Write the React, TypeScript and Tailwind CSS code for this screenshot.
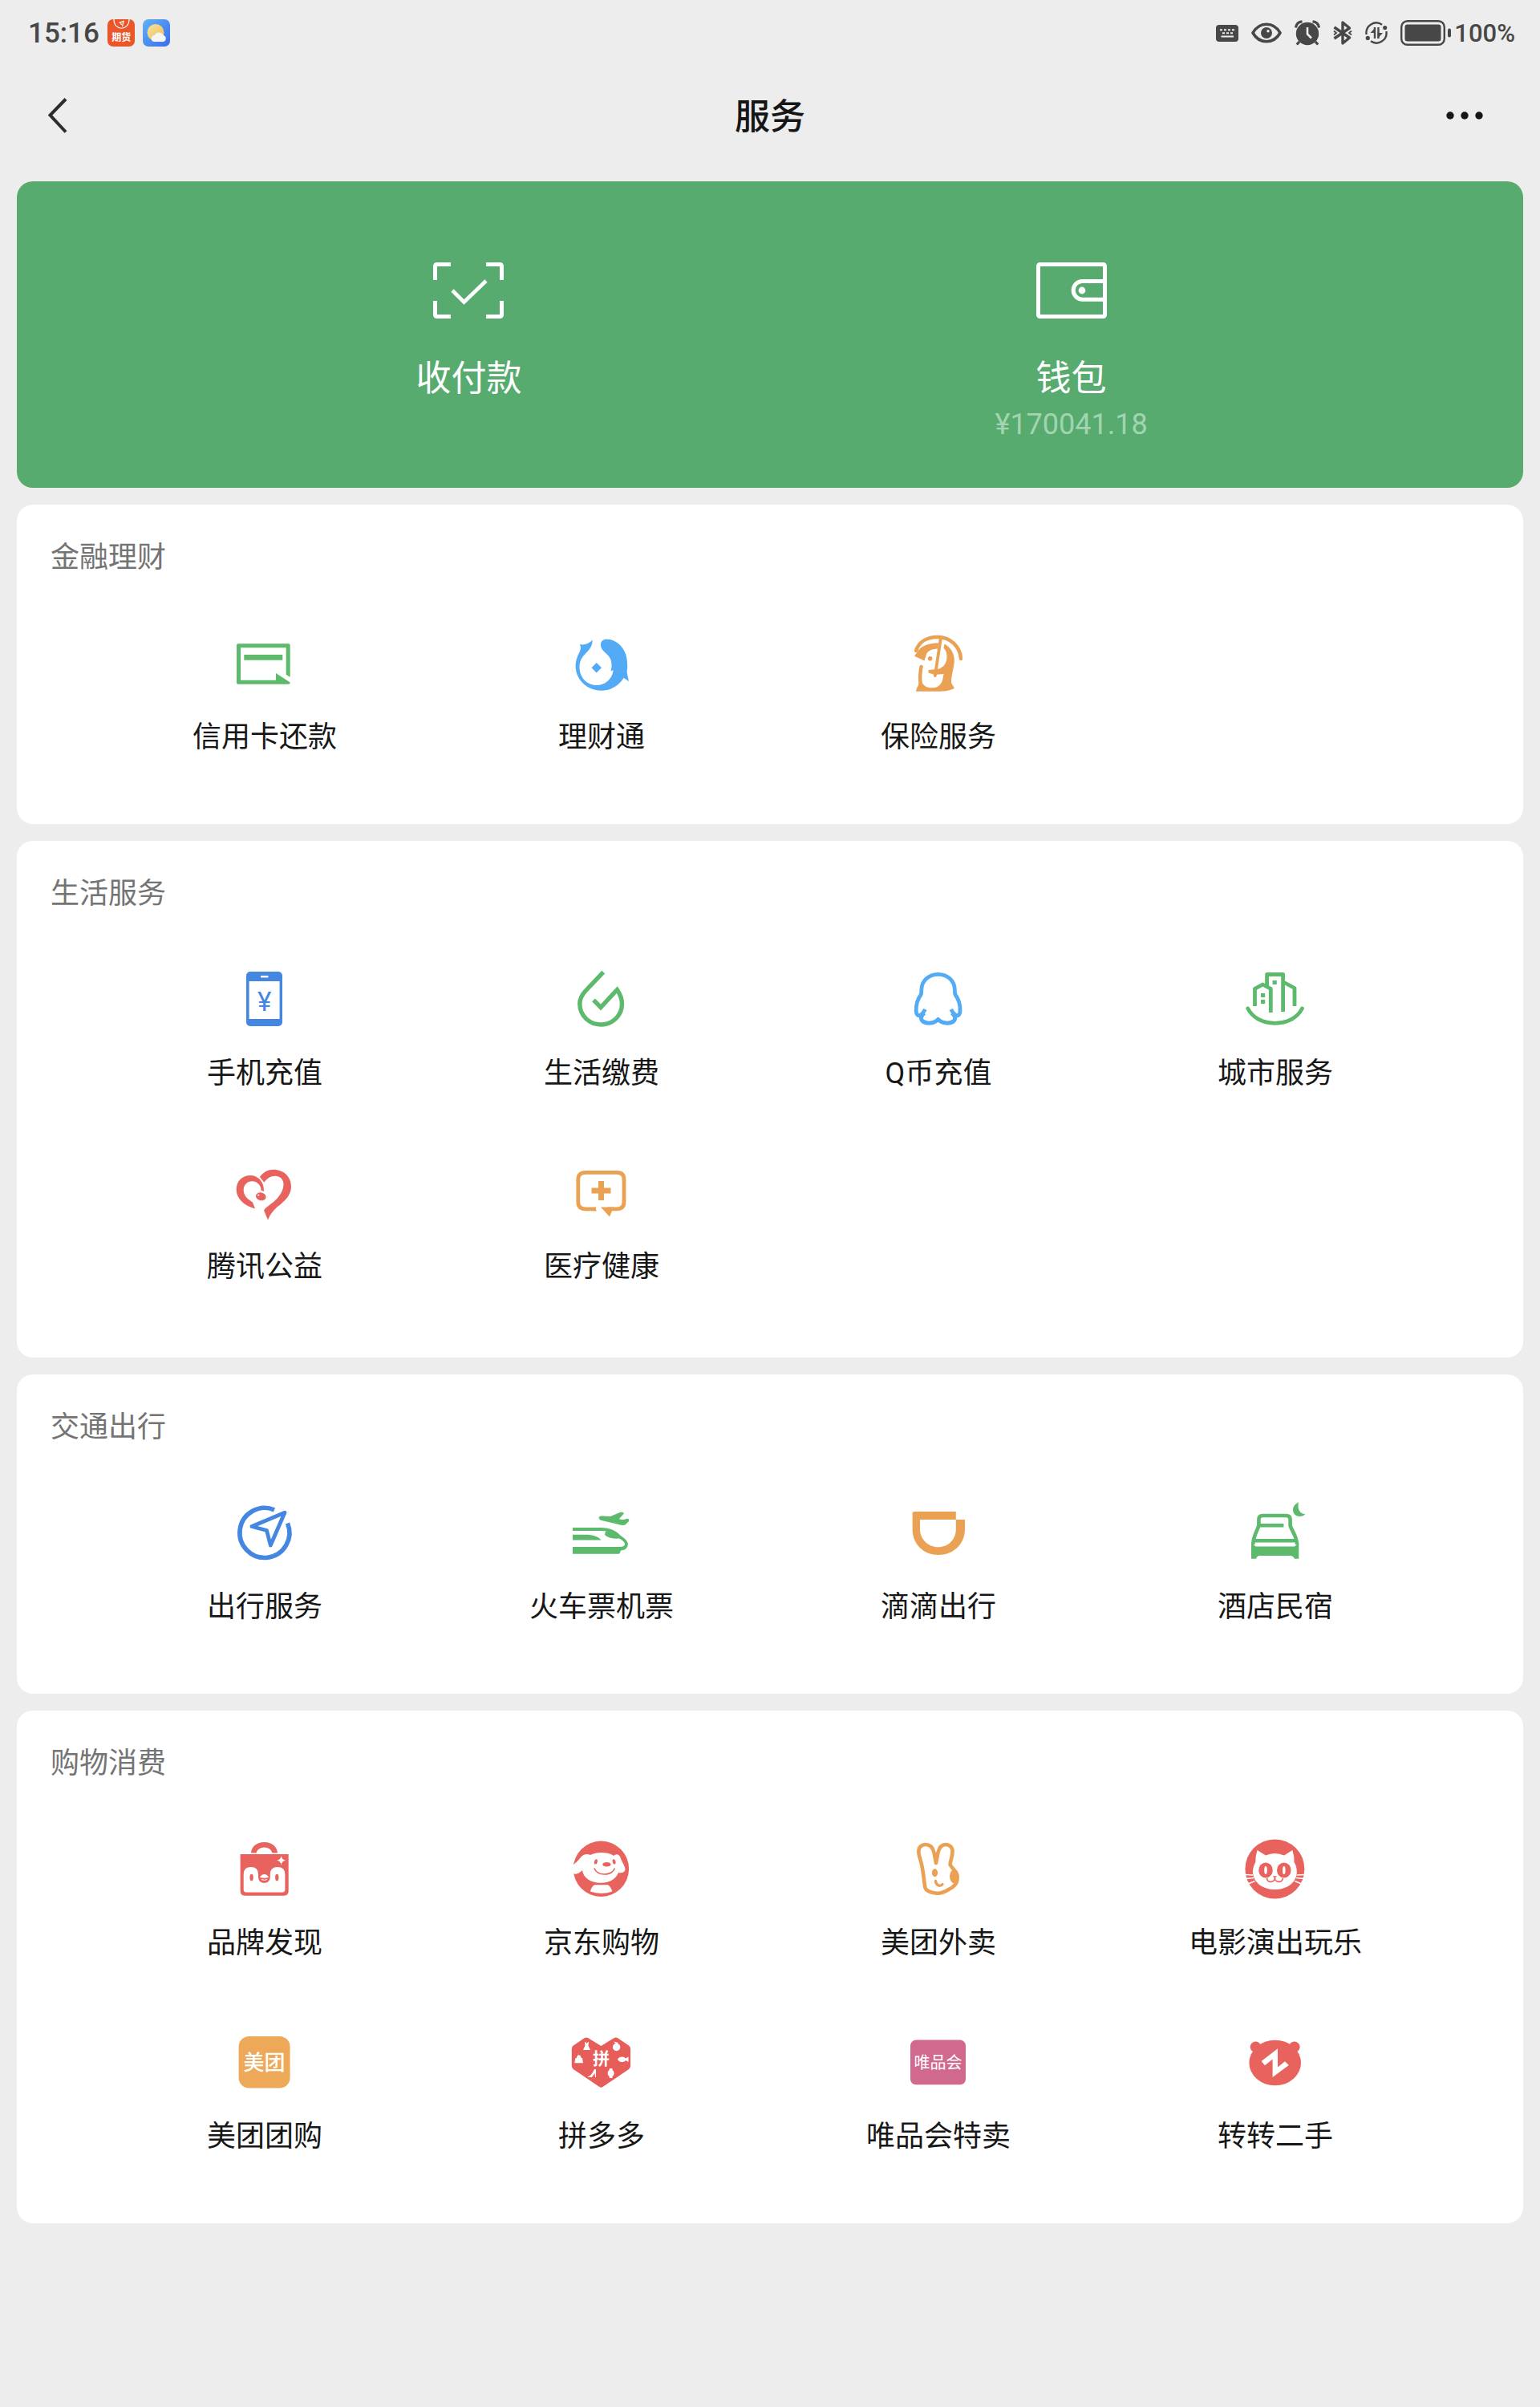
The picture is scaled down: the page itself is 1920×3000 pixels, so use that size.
import type { ReactNode } from 'react';

const GREEN = '#5dba6c';
const BLUE = '#4487e1';
const SKY = '#53aaf5';
const ORANGE = '#eba153';
const RED = '#e8635e';
const CJK = '"Noto Sans CJK SC", sans-serif';

interface Service {
  label: string;
  icon: ReactNode;
}

interface Section {
  title: string;
  items: Service[];
  roomy?: boolean;
}

// ─── Service icons (84 × 84 grid) ────────────────────────────────────────────

function Icon({ children }: { children: ReactNode }) {
  return (
    <svg viewBox="0 0 84 84" fill="none" className="size-[84px] shrink-0" aria-hidden="true">
      {children}
    </svg>
  );
}

const creditCard = (
  <Icon>
    <path
      d="M9 17.3H72Q73.7 17.3 73.7 19V59L68.7 55.7V22.3H12V62.8H56V54L73.7 65.5Q73.7 67.7 72 67.7H9Q7 67.7 7 66V19Q7 17.3 9 17.3Z"
      fill={GREEN}
    />
    <path d="M16.3 31H64.3V37.7H16.3Z" fill={GREEN} />
  </Icon>
);

const wealth = (
  <Icon>
    <path
      d="M30.8 12.7C26 17.5 20 19 15 18.3C16.5 22 16 25 14.4 28C11 34 9.6 40 9.6 45C9.6 62 24 75.7 41.4 75.7C53 75.7 63.5 70 69.6 60C71 61 74 62 75.7 64.5C75.7 60 74 57 73.6 51.7C74.4 48 74.2 45 74 41C73.5 24 62 11.7 48.3 11.7C44 11.7 41 14 41 18.3C41 23 43 25 46 28C52 33 55 37 54.5 46L53.6 51.7L56.5 50C56 60 47 69 36 69C23.5 69 14.5 59 14.5 46.7C14.5 36 20 32 24.5 27C28.5 23 30.5 18 30.8 12.7Z"
      fill={SKY}
    />
    <path d="M35.7 41L42 47.3L35.7 53.6L29.5 47.3Z" fill={SKY} />
  </Icon>
);

const insurance = (
  <Icon>
    <g stroke={ORANGE} strokeWidth="4.4" strokeLinecap="round">
      <path d="M14 26C18 14 29 9 41 9C56 9 69 20 70 36" />
      <path d="M44.8 11L37.8 57" strokeWidth="3.8" />
      <path d="M20.6 46C19 53 19 60 19.5 66" />
    </g>
    <g fill={ORANGE}>
      <path d="M12 32.7L18 24.3C24 18.5 32 16.5 42 16.5L41.4 23.5C33 23.5 27.5 27 26.5 32L24.5 38.5Z" />
      <path d="M49.5 17.5C58 22 62.5 31 61.8 40C60.5 50 58 58 58 65C58.5 69 61.5 70 61.8 73C54 76.5 48 76.7 42.6 76.7H14C14.5 72 17.5 70 17.5 66L21 62C21 69 27 72.3 34.5 72.3C43 72.3 47.5 66 48 57L48.7 55L37 56L29.5 53.5V50L41 49C49 47.5 52.5 40 52.5 34C52.5 28 51 25 48.5 23Z" />
      <circle cx="31.6" cy="35.7" r="2.8" />
    </g>
  </Icon>
);

const phone = (
  <Icon>
    <rect x="19" y="7" width="45" height="68" rx="5" fill={BLUE} />
    <rect x="22.6" y="19" width="38" height="47" fill="#fff" />
    <rect x="37" y="12" width="9.4" height="2.4" fill="#fff" />
    <text x="41.6" y="56" textAnchor="middle" fontSize="33" fontFamily="Roboto, sans-serif" fill={BLUE}>
      ¥
    </text>
  </Icon>
);

const utilities = (
  <Icon>
    <path
      d="M44.2 7.7L22 31C17 36.5 14.8 41.5 14.8 47C14.8 62 27 73 41 73C55.5 73 67.5 62 67.5 47C67.5 41 65 35 61.4 29.5L41 51.5L32 42.3"
      stroke={GREEN}
      strokeWidth="5.4"
    />
  </Icon>
);

const qCoin = (
  <Icon>
    <path
      d="M25.5 54C23.5 58 22 59.5 20 61C17 63 14.4 61 14.2 56C14 50 15.5 42 20 36C21 34 20.8 33 20.8 30C20.8 18.5 30 10.3 41.6 10.3C53.2 10.3 62.4 18.5 62.4 30C62.4 33 62.2 34 63.2 36C67.7 42 69.2 50 69 56C68.8 61 66.2 63 63.2 61C61.2 59.5 59.7 58 57.7 54"
      stroke={SKY}
      strokeWidth="4.8"
      strokeLinejoin="round"
    />
    <path
      d="M24.5 58.5C20 62 19.5 66 22 68.5C27 72.5 37 72 41.6 66.5C46.2 72 56.2 72.5 61.2 68.5C63.7 66 63.2 62 58.7 58.5"
      stroke={SKY}
      strokeWidth="5"
      strokeLinejoin="round"
    />
  </Icon>
);

const city = (
  <Icon>
    <g stroke={GREEN} strokeWidth="4.8" strokeLinejoin="round">
      <path d="M7.8 53C14 65 27 71.3 41.6 71.3C56.2 71.3 69.2 65 75.4 53" strokeLinecap="round" />
      <path d="M31.6 26V10.5H51.6V57" />
      <path d="M16.5 50V28.3L26.3 23L36.3 28.3V58" />
      <path d="M52 20L66 27.5V50" />
    </g>
    <path d="M38.6 18H43.8V23H38.6ZM24 34H29.2V39H24ZM24 42H29.2V47H24Z" fill={GREEN} />
  </Icon>
);

const charity = (
  <Icon>
    <g fill={RED}>
      <path d="M36 22C40 16 46 12.8 53 12.8C66 12.8 75 22 75 34C75 45 66 53 58 59C52 64 48 70 46 75.5L41 63.5C43 60 48 57 53 53C60 47 65.5 39 65.5 31C65.5 24.5 61 20.7 55 20.7C49 20.7 44.5 24 41.4 28.8Z" />
      <path d="M41 40L37.5 38.5C37.5 32 32 27.3 26.5 27.3C20 27.3 15.7 32 15.7 38.5C15.7 45 21 50 27 53.5L30 61.5C16 57.5 6.7 49 6.7 37.5C6.7 27 14.5 20 24 20C34 20 41.5 28 41 40Z" />
      <ellipse cx="37.3" cy="46.3" rx="6.4" ry="4.9" transform="rotate(15 37.3 46.3)" />
    </g>
    <circle cx="34.2" cy="44.6" r="1.1" fill="#fff" />
  </Icon>
);

const medical = (
  <Icon>
    <path d="M35 61.8H22Q12.8 61.8 12.8 53V25Q12.8 16.4 22 16.4H61Q70 16.4 70 25V53Q70 61.8 61 61.8H50" stroke={ORANGE} strokeWidth="4.8" />
    <path d="M31 59.4L36.5 64.2H30ZM41 59.4H58L55 64.2L52 71.5Z" fill={ORANGE} />
    <path d="M41.5 27V51M29.5 39H53.5" stroke={ORANGE} strokeWidth="7" />
  </Icon>
);

const travel = (
  <Icon>
    <g stroke={BLUE} strokeLinejoin="round">
      <path d="M70.5 29.5A31 31 0 1 1 54 12.9" strokeWidth="5.6" />
      <path d="M67 16.3L26 33.5L44.5 38.5L49.3 57Z" strokeWidth="4.8" />
    </g>
  </Icon>
);

const tickets = (
  <Icon>
    <g fill={GREEN}>
      <path d="M38.5 22.5C39 20 42 20 53 21L65 16C67 15.3 69.5 16 70 17.2L63.8 24.3C68 26 72 24.5 73.5 23.8C76 23.5 76.5 25.5 76 27L72 31C70 32.5 67 32 65 31.5L42 26Q38.8 25 38.5 22.5Z" />
      <path d="M6 43.7H22C31 43.7 38 46 41.6 50.5H6Z" />
      <path d="M47 39.5C57 38 64 43 67.5 47C65 50 49 49 46 43.5Z" />
      <path d="M6 59H65C68 59 70 58 72 56L74 58C71 62 68 62.5 66.5 63.5C64.5 64.5 66 67.7 63 67.7H6Z" />
    </g>
    <path d="M6 37H42C54 37 60 41 64 46C68 49 73 51 73 56C73 59 70 61 67 61.5" stroke={GREEN} strokeWidth="3.8" />
  </Icon>
);

const didi = (
  <Icon>
    <path
      d="M11.6 15H63.8V25H19V37C19 50 30 59.3 41.5 59.3C54 59.3 63.8 50 63.8 37V25H75V37C75 56 60 69 42 69C24 69 9.6 56 9.6 37V17Q9.6 15 11.6 15Z"
      fill={ORANGE}
    />
  </Icon>
);

const hotel = (
  <Icon>
    <path d="M71 3.3C66.5 5.5 64 9 64 13C64 18 68 21 72.5 21C75.5 21 78 20 79.3 18C73 18.5 69 12 71 3.3Z" fill={GREEN} />
    <g stroke={GREEN} strokeWidth="4.6">
      <path d="M14.3 56C14.3 46 19 40 21.4 32.5V25Q21.4 20 26.4 20H55.6Q60.6 20 60.6 25V32.5C63 40 69 46 69 56" />
      <path d="M21.4 32.2H52.4M16 51.3H67" />
    </g>
    <path d="M12 54L16.5 57.5Q17 58.4 18 58.4H65.5Q66.5 58.4 67 57.5L71.3 54V73.7H66Q64 70 61 70H22Q19.5 70 18 73.7H12Z" fill={GREEN} />
  </Icon>
);

const brandBag = (
  <Icon>
    <path d="M25 21.5C25.5 13.5 32 8 41.5 8C51 8 57.5 13.5 58 21.5H51.5C50.5 17.5 46.8 14.5 41.5 14.5C36.2 14.5 32.5 17.5 31.5 21.5Z" fill={RED} />
    <path d="M11.6 23H71.7V69Q71.7 74.7 66 74.7H17.3Q11.6 74.7 11.6 69Z" fill={RED} />
    <path
      d="M15.7 67V48Q15.7 39 24.8 39Q34 39 34 48V51C34 56 37 58.8 41.4 58.8C46 58.8 48.8 56 48.8 51V48Q48.8 39 58 39Q67.4 39 67.4 48V67Q67.4 70.4 64 70.4H19Q15.7 70.4 15.7 67Z"
      fill="#fff"
    />
    <ellipse cx="25.6" cy="52" rx="2.2" ry="4.2" fill={RED} />
    <ellipse cx="57.3" cy="52" rx="2.2" ry="4.2" fill={RED} />
    <path d="M36 52Q38 48 41.5 48Q45 48 47 52Q41.5 53.5 36 52Z" fill="#fff" />
    <path d="M38 54.6Q41.5 56 45 54.6" stroke="#fff" strokeWidth="1" />
    <path d="M62.6 25Q63.2 30 68.3 30.7Q63.2 31.4 62.6 36.4Q62 31.4 57 30.7Q62 30 62.6 25Z" fill="#fff" />
  </Icon>
);

const jd = (
  <Icon>
    <circle cx="41.4" cy="41.3" r="34.7" fill={RED} />
    <g fill="#fff">
      <path d="M28 24C24 22 19 23 16 27C12 32 8 35 6 37V47C11 49 15 46 18 43C19 52 28 58.8 41 58.8C52 58.8 60 54 63 46C67 47 71 46 71.5 42C71 37 67 32 65 26C63 22.5 60 22.5 57 25C50 20 36 20 28 24Z" />
      <path d="M33 61.2H50Q54 64 55.3 69.5Q42 74 28 69.5Q29 64 33 61.2Z" />
    </g>
    <ellipse cx="34.9" cy="32.4" rx="1.9" ry="3.2" fill={RED} transform="rotate(12 34.9 32.4)" />
    <ellipse cx="57.6" cy="32.4" rx="1.9" ry="3.2" fill={RED} transform="rotate(-12 57.6 32.4)" />
    <ellipse cx="48.4" cy="35.8" rx="5.2" ry="2.8" fill={RED} />
    <path d="M33 40.5C36 50 54 51 58.5 40.5" stroke={RED} strokeWidth="1.6" />
  </Icon>
);

const takeout = (
  <Icon>
    <path
      d="M25.5 65C24 57 23.5 48 21.5 38C20 30 17.3 25 17.3 20C17.3 14 21 11 26 11C32 11 35 14.5 36.5 21L39 34L41.5 21C43 14.5 46 11 51 11C56.5 11 60 15 59.5 21C59 27 57 31 56.5 36C59 41 65 44 65.5 51C66 57 64.5 61 59 64.5C54 67 48 72.5 40 71.7C33 71 27 69.5 25.5 65Z"
      stroke={ORANGE}
      strokeWidth="4.6"
      strokeLinejoin="round"
    />
    <ellipse cx="37.5" cy="46.2" rx="3.6" ry="5" fill={ORANGE} />
    <ellipse cx="61.8" cy="50.6" rx="5.8" ry="8.8" fill={ORANGE} />
    <path d="M38.5 56.5C39 61.5 44 64 47 60.5" stroke={ORANGE} strokeWidth="3.4" strokeLinecap="round" />
  </Icon>
);

const movie = (
  <Icon>
    <circle cx="41.4" cy="41.5" r="37" fill={RED} />
    <path
      d="M19.5 18L30 24.5Q41.4 19.5 53 24.5L63.3 18Q66 26 65.5 33C68 37 69 41 68.8 46C68 59 56 67 41.4 67C27 67 15 59 14 46C13.8 41 15 37 17.3 33Q17 26 19.5 18Z"
      fill="#fff"
    />
    <ellipse cx="30" cy="43" rx="8.8" ry="9.4" fill={RED} />
    <ellipse cx="52.8" cy="43" rx="8.8" ry="9.4" fill={RED} />
    <ellipse cx="30" cy="43" rx="1.8" ry="5" fill="#fff" />
    <ellipse cx="52.8" cy="43" rx="1.8" ry="5" fill="#fff" />
    <path d="M38.8 50.2H44L41.4 53.3Z" fill={RED} />
    <path d="M31.5 53C31.5 59 41.4 59 41.4 52.5C41.4 59 51.3 59 51.3 53" stroke={RED} strokeWidth="1.7" />
    <path d="M4 48.5L14 49M5 53.5L15 52.5M8 60L16.5 56.5M78.8 48.5L68.8 49M77.8 53.5L67.8 52.5M74.8 60L66.3 56.5" stroke="#fff" strokeWidth="1.6" />
  </Icon>
);

const meituan = (
  <Icon>
    <rect x="9.6" y="9" width="64" height="64.6" rx="13" fill="#eda858" />
    <text x="41.6" y="51" textAnchor="middle" fontSize="26" fontWeight="500" fontFamily={CJK} fill="#fff">
      美团
    </text>
  </Icon>
);

const pinduoduo = (
  <Icon>
    <path
      d="M20.5 11.2Q23 9.8 25.5 11.2L41.4 21L57.3 11.2Q59.8 9.8 62.3 11.2L76 20.5Q78 22 78 24.5V46Q78 48.5 76 50L43.5 72Q41.4 73.3 39.3 72L6.8 50Q4.8 48.5 4.8 46V24.5Q4.8 22 6.8 20.5Z"
      fill="#e65d59"
    />
    <text x="41.6" y="44" textAnchor="middle" fontSize="21" fontWeight="700" fontFamily={CJK} fill="#fff">
      拼
    </text>
    <g fill="#fff">
      <path d="M21 16H22L23.4 18L25 16H26L25.5 20.5L28 26H19L21.5 20.5Z" />
      <circle cx="60.6" cy="22.5" r="4.7" />
      <path d="M57 15.5L63 17L61 19Z" />
      <path d="M9.5 36H11C11 31 16.5 31 16.5 36H18L19 42.3H8.3Z" />
      <path d="M62 37.7C64 33.5 70 33.5 72 36.5L75.5 34.5V41L72 39C70 42 64 42 62 37.7Z" />
      <path d="M25 59C29 58.5 31 54 33 50H35V60H34L33.5 55L30 60H25Z" />
      <rect x="51.6" y="49" width="4" height="12" rx="1" />
      <circle cx="53.6" cy="55" r="4" />
    </g>
  </Icon>
);

const vip = (
  <Icon>
    <rect x="7" y="13.6" width="69" height="55.6" rx="7" fill="#d1698f" />
    <text x="41.5" y="49" textAnchor="middle" fontSize="20" fontFamily={CJK} fill="#fff">
      唯品会
    </text>
  </Icon>
);

const zhuanzhuan = (
  <Icon>
    <g fill={RED}>
      <ellipse cx="41.7" cy="42" rx="32.3" ry="28.3" />
      <circle cx="17.5" cy="22.3" r="6.8" />
      <circle cx="65.8" cy="22.3" r="6.8" />
    </g>
    <path d="M24.6 40L45 24.2V47.5L54 40.3L58.8 45L38.6 60V37.5L29 45.3Z" fill="#fff" />
  </Icon>
);

// ─── Page data ───────────────────────────────────────────────────────────────

const sections: Section[] = [
  {
    title: '金融理财',
    items: [
      { label: '信用卡还款', icon: creditCard },
      { label: '理财通', icon: wealth },
      { label: '保险服务', icon: insurance },
    ],
  },
  {
    title: '生活服务',
    roomy: true,
    items: [
      { label: '手机充值', icon: phone },
      { label: '生活缴费', icon: utilities },
      { label: 'Q币充值', icon: qCoin },
      { label: '城市服务', icon: city },
      { label: '腾讯公益', icon: charity },
      { label: '医疗健康', icon: medical },
    ],
  },
  {
    title: '交通出行',
    items: [
      { label: '出行服务', icon: travel },
      { label: '火车票机票', icon: tickets },
      { label: '滴滴出行', icon: didi },
      { label: '酒店民宿', icon: hotel },
    ],
  },
  {
    title: '购物消费',
    items: [
      { label: '品牌发现', icon: brandBag },
      { label: '京东购物', icon: jd },
      { label: '美团外卖', icon: takeout },
      { label: '电影演出玩乐', icon: movie },
      { label: '美团团购', icon: meituan },
      { label: '拼多多', icon: pinduoduo },
      { label: '唯品会特卖', icon: vip },
      { label: '转转二手', icon: zhuanzhuan },
    ],
  },
];

// ─── Status bar ──────────────────────────────────────────────────────────────

function StatusBar() {
  return (
    <div className="flex h-[82px] items-center justify-between pl-[35px] pr-[31px] text-[#474747]">
      <div className="flex items-center gap-[10px]">
        <span className="text-[35px] leading-none font-medium">15:16</span>
        <svg width="34" height="34" viewBox="0 0 34 34" fill="none" aria-hidden="true">
          <rect width="34" height="34" rx="7" fill="#ea5529" />
          <path d="M8 0C8 15 27 15 27 0" stroke="#fff" strokeWidth="1.2" />
          <path d="M14 4.5L20 2.5L18.5 9M16.5 4.5L17.5 7" stroke="#fff" strokeWidth="1.2" />
          <text x="17.3" y="27" textAnchor="middle" fontSize="12" fontWeight="700" fontFamily={CJK} fill="#fff">
            期货
          </text>
        </svg>
        <svg width="34" height="34" viewBox="0 0 34 34" aria-hidden="true">
          <defs>
            <linearGradient id="sky" x1="0" y1="0" x2="1" y2="1">
              <stop offset="0" stopColor="#62b1f5" />
              <stop offset="1" stopColor="#3a6cec" />
            </linearGradient>
            <linearGradient id="sun" x1="0" y1="0" x2="1" y2="1">
              <stop offset="0" stopColor="#f0e3a0" />
              <stop offset="1" stopColor="#f3bd54" />
            </linearGradient>
          </defs>
          <rect width="34" height="34" rx="7" fill="url(#sky)" />
          <circle cx="16" cy="16.5" r="10.5" fill="url(#sun)" />
          <path d="M15 28a4 4 0 0 1-.5-8A6.5 6.5 0 0 1 26 20a4.2 4.2 0 0 1-.5 8Z" fill="#f4f6f4" />
        </svg>
      </div>

      <div className="flex items-center gap-4">
        {/* Keyboard */}
        <svg width="28" height="21" viewBox="0 0 28 21" aria-hidden="true">
          <rect width="28" height="21" rx="4" fill="currentColor" />
          <path
            d="M5 6.2H8M10 6.2H13M15 6.2H18M20 6.2H23M8 10.3H11M13 10.3H16M18 10.3H21M6.5 14.5H22"
            stroke="#ededed"
            strokeWidth="1.9"
          />
        </svg>
        {/* Eye */}
        <svg width="38" height="26" viewBox="0 0 38 26" fill="none" aria-hidden="true">
          <path d="M2 13C6 6 12 2.3 19 2.3S32 6 36 13C32 20 26 23.7 19 23.7S6 20 2 13Z" stroke="currentColor" strokeWidth="3.6" strokeLinejoin="round" />
          <circle cx="19" cy="13" r="7" fill="currentColor" />
          <circle cx="21" cy="10.8" r="1.7" fill="#ededed" />
        </svg>
        {/* Alarm */}
        <svg width="32" height="32" viewBox="0 0 32 32" fill="none" stroke="currentColor" aria-hidden="true">
          <circle cx="16" cy="17" r="14.2" fill="currentColor" stroke="none" />
          <path d="M1.5 9.5C2 5 5 2.2 9.5 1.8M30.5 9.5C30 5 27 2.2 22.5 1.8M6 27L2.8 30.5M26 27L29.2 30.5" strokeWidth="3.2" />
          <path d="M16 9V17.5L21 22.5" stroke="#ededed" strokeWidth="2.6" />
        </svg>
        {/* Bluetooth */}
        <svg width="24" height="32" viewBox="0 0 24 32" fill="none" stroke="currentColor" strokeWidth="3.4" aria-hidden="true">
          <path d="M1.5 9L20.5 22L12 29V3L20.5 10L1.5 23" strokeLinejoin="round" />
          <path d="M1 13.5L4 16L1 18.5M23 13.5L20 16L23 18.5" strokeWidth="1.8" />
        </svg>
        {/* Data sync */}
        <svg width="28" height="28" viewBox="0 0 28 28" fill="none" stroke="currentColor" strokeWidth="2.4" aria-hidden="true">
          <path d="M1.6 16A12.5 12.5 0 0 1 21 3.7M26.4 12A12.5 12.5 0 0 1 7 24.3" />
          <circle cx="24.7" cy="7.6" r="2.6" fill="currentColor" stroke="none" />
          <circle cx="3.3" cy="20.4" r="2.6" fill="currentColor" stroke="none" />
          <path d="M12 21V7M16.5 7V21" />
          <path d="M13 7V14H6.5ZM15.5 21V14H22Z" fill="currentColor" stroke="none" />
        </svg>
        <div className="flex items-center gap-1">
          {/* Battery */}
          <svg width="63" height="32" viewBox="0 0 63 32" fill="none" aria-hidden="true">
            <rect x="1.2" y="1.2" width="53.6" height="29.6" rx="7.5" stroke="currentColor" strokeWidth="2.4" />
            <rect x="5.5" y="5.5" width="45" height="21" rx="3" fill="currentColor" />
            <rect x="59" y="10.5" width="4" height="11" rx="2" fill="currentColor" />
          </svg>
          <span className="text-[31px] leading-none font-medium">100%</span>
        </div>
      </div>
    </div>
  );
}

// ─── Blocks ──────────────────────────────────────────────────────────────────

function NavBar() {
  return (
    <header className="grid h-[124px] grid-cols-3 items-center px-12 text-[#161616]">
      <button type="button" aria-label="返回" className="justify-self-start p-3">
        <svg width="24" height="44" viewBox="0 0 24 44" fill="none" aria-hidden="true">
          <path d="M22 1.5L2.5 21.5L22 42.5" stroke="#2c2c2c" strokeWidth="4" />
        </svg>
      </button>
      <h1 className="pt-1 text-center text-[44px] leading-[56px] font-medium">服务</h1>
      <button type="button" aria-label="更多" className="justify-self-end px-[23px] py-3">
        <svg width="46" height="10" viewBox="0 0 46 10" fill="currentColor" aria-hidden="true">
          <circle cx="5" cy="5" r="4.7" />
          <circle cx="23" cy="5" r="4.7" />
          <circle cx="41" cy="5" r="4.7" />
        </svg>
      </button>
    </header>
  );
}

function WalletCard() {
  return (
    <section className="grid grid-cols-2 items-start rounded-[20px] bg-[#58ab6f] px-[10%] pt-[101px] pb-[59px] text-white">
      <button type="button" className="flex flex-col items-center">
        <svg width="88" height="70" viewBox="0 0 88 70" fill="none" stroke="currentColor" strokeWidth="5" aria-hidden="true">
          <path d="M22 2.5H5Q2.5 2.5 2.5 5V22M66 2.5H83Q85.5 2.5 85.5 5V22M2.5 48V65Q2.5 67.5 5 67.5H22M85.5 48V65Q85.5 67.5 83 67.5H66" />
          <path d="M24 35L38.5 49.5L66 23" strokeWidth="4.6" />
        </svg>
        <span className="mt-[47px] text-[44px] leading-[56px]">收付款</span>
      </button>
      <button type="button" className="flex flex-col items-center">
        <svg width="88" height="70" viewBox="0 0 88 70" fill="none" stroke="currentColor" strokeWidth="5" aria-hidden="true">
          <rect x="2.5" y="2.5" width="83" height="65" rx="2" />
          <path d="M85.5 23.5H57.5A11.3 11.3 0 0 0 57.5 46.2H85.5" />
          <circle cx="57" cy="35" r="4.4" fill="currentColor" stroke="none" />
        </svg>
        <span className="mt-[47px] text-[44px] leading-[56px]">钱包</span>
        <span className="mt-[9px] text-[36px] leading-10 text-[#a3d4b1]">¥170041.18</span>
      </button>
    </section>
  );
}

function ServiceSection({ title, items, roomy }: Section) {
  return (
    <section className={`rounded-[20px] bg-white pt-[42px] ${roomy ? 'pb-[89px]' : 'pb-[84px]'}`}>
      <h2 className="px-[42px] text-[36px] leading-[48px] text-[#747474]">{title}</h2>
      <div className="mt-[66px] grid grid-cols-4 gap-y-[83px] px-[99px]">
        {items.map((item) => (
          <button key={item.label} type="button" className="flex flex-col items-center gap-[26px] text-[#171717]">
            {item.icon}
            <span className="text-[36px] leading-[48px] whitespace-nowrap">{item.label}</span>
          </button>
        ))}
      </div>
    </section>
  );
}

export default function App() {
  return (
    <div className="min-h-screen bg-[#ededed] font-['Roboto','Noto_Sans_CJK_SC',sans-serif]">
      <StatusBar />
      <NavBar />
      <main className="flex flex-col gap-[21px] px-[21px] pt-5 pb-10">
        <WalletCard />
        {sections.map((section) => (
          <ServiceSection key={section.title} {...section} />
        ))}
      </main>
    </div>
  );
}
